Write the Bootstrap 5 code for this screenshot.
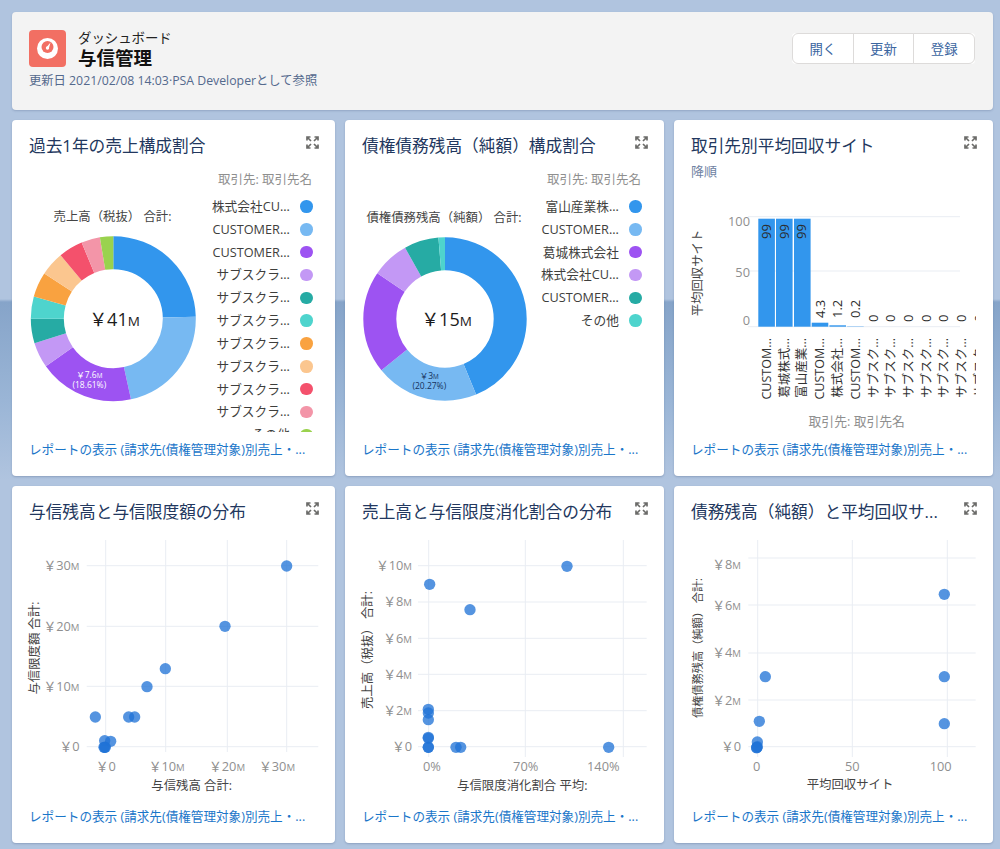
<!DOCTYPE html>
<html lang="ja">
<head>
<meta charset="utf-8">
<title>与信管理</title>
<link href="https://cdn.jsdelivr.net/npm/bootstrap@5.3.0/dist/css/bootstrap.min.css" rel="stylesheet">
<style>
html,body{height:849px;overflow:hidden}
body{font-family:"Open Sans","Noto Sans CJK JP",sans-serif;font-size:12.5px;color:#3e3e3c;
 background:linear-gradient(#b0c4df 0,#b0c4df 299px,#86a4c9 302px,#9ab5d6 400px,#b0c4df 480px)}
.dash{display:grid;grid-template-columns:323px 319px 319px;grid-template-rows:98px 356px 357px;gap:10px;padding:12px 0 0 12px}
.dash-head{grid-column:1/4;background:#f3f3f3;border-radius:4px;box-shadow:0 1px 2px rgba(60,80,120,.25);padding:17px 18px 0 17px}
.dash-icon{width:37px;height:37px;flex:none}
.kicker{font-size:13.4px;line-height:17px;color:#222;padding-top:1px}
.dash-name{font-size:18.5px;line-height:21px;font-weight:700;color:#111;margin:0}
.meta{font-size:12.3px;line-height:18px;color:#54698d;margin-top:4px}
.acts{margin-top:4px;height:31px;background:#fff;border-radius:4px}
.acts .btn{font-size:13.4px;line-height:18px;color:#3a659f;background:#fff;border-color:#dddbda;padding:5px 0;width:61.700px}
.tile{border:0;border-radius:4px;box-shadow:0 1px 2px rgba(60,80,120,.3);overflow:hidden}
.tile-top{padding:14px 16px 2px 17px;height:40px}
.tile-top.withsub{height:61px}
.tile-title{font-size:16.7px;line-height:24px;color:#22375e;margin:0;font-weight:400;white-space:nowrap}
.tile-sub{font-size:13px;line-height:20px;color:#6f82a2;padding-top:3px}
.expand{width:13px;height:13px;margin:2px 0 0 0;flex:none;stroke:#6b6b69;stroke-width:1.7;fill:none}
.tile-foot{margin-top:auto;padding:0 17px 17px 17px;line-height:18px;font-size:12.6px;white-space:nowrap}
.tile-foot a{color:#1a76c9;text-decoration:none}
.chart-row{height:272px;overflow:hidden}
.chart{display:block;flex:none}
.chart text{font-family:"Open Sans","Noto Sans CJK JP",sans-serif;font-size:12.8px;fill:#8f8f8f}
.chart text.cap{font-size:12.4px;fill:#444}
.chart text.tiny{font-size:11.2px;fill:#444}
.chart text.big{font-size:18px;fill:#1b1b1b}
.chart text.val{font-size:13px;fill:#2b2b2b}
.chart text.lab{font-size:12.5px;fill:#333}
.chart text.mini{font-size:8.5px;fill:#fff}
.chart text.mini-d{font-size:8.5px;fill:#16325c}
.chart .u{font-size:.75em}
.line{stroke:#e9edf3;stroke-width:1}
.pt{fill:#1f73d6;fill-opacity:.76}
.leg{flex:1;min-width:0;padding:10px 22px 0 0;text-align:right;height:272px;overflow:hidden}
.leg-head{line-height:20px;color:#8f8f8f;margin-bottom:5px;padding-right:1px;font-size:12.5px}
.leg ul{margin:0;padding:0;list-style:none}
.leg li{height:22.85px;display:flex;align-items:center;justify-content:flex-end;gap:10.5px;color:#3e3e3c;font-size:12.7px;white-space:nowrap}
.swatch{width:12.6px;height:12.6px;border-radius:50%;flex:none}
.c1{background:#3296ed}.c2{background:#77b9f2}.c3{background:#9d53f2}.c4{background:#c398f5}.c5{background:#26aba4}
.c6{background:#4ed4cd}.c7{background:#f9a240}.c8{background:#fbc68f}.c9{background:#f4516c}.c10{background:#f395a8}.c11{background:#9ad24e}
.seg{fill:none;stroke-width:33}
</style>
</head>
<body>
<svg width="0" height="0" class="position-absolute"><defs>
<symbol id="exp" viewBox="0 0 13 13"><path d="M1 4.500V1H4.500M1 1L5 5M8.500 1H12V4.500M12 1L8 5M1 8.500V12H4.500M1 12L5 8M8.500 12H12V8.500M12 12L8 8"/></symbol>
</defs></svg>
<main class="dash">
 <header class="dash-head d-flex justify-content-between align-items-start">
  <div>
   <div class="d-flex gap-2 align-items-center">
    <svg class="dash-icon me-1" viewBox="0 0 37 37"><rect width="37" height="37" rx="4" fill="#f26f63"/><circle cx="18.500" cy="18.500" r="10.500" fill="#fff"/><circle cx="18.500" cy="17" r="6" fill="#f26f63"/><path d="M17.300 17.500L21.500 12.500L19.800 18.500Z" fill="#fff"/><circle cx="18.500" cy="18" r="1.700" fill="#fff"/></svg>
    <div><div class="kicker">ダッシュボード</div><h1 class="dash-name">与信管理</h1></div>
   </div>
   <div class="meta">更新日 2021/02/08 14:03·PSA Developerとして参照</div>
  </div>
  <div class="btn-group acts" role="group">
   <button type="button" class="btn">開く</button>
   <button type="button" class="btn">更新</button>
   <button type="button" class="btn">登録</button>
  </div>
 </header>

 <section class="card tile">
  <div class="tile-top d-flex justify-content-between"><h2 class="tile-title">過去1年の売上構成割合</h2><svg class="expand"><use href="#exp"/></svg></div>
  <div class="d-flex chart-row">
   <svg class="chart" width="193" height="272" viewBox="12 160 193 272">
    <text x="112.500" y="221" text-anchor="middle" class="cap">売上高（税抜） 合計:</text>
    <g transform="rotate(-90 113.300 318.700)">
     <circle class="seg" cx="113.300" cy="318.700" r="66" pathLength="360" stroke="#3296ed" stroke-dasharray="88.600 360"/>
     <circle class="seg" cx="113.300" cy="318.700" r="66" pathLength="360" stroke="#77b9f2" stroke-dasharray="79 360" stroke-dashoffset="-88.600"/>
     <circle class="seg" cx="113.300" cy="318.700" r="66" pathLength="360" stroke="#9d53f2" stroke-dasharray="67.200 360" stroke-dashoffset="-167.600"/>
     <circle class="seg" cx="113.300" cy="318.700" r="66" pathLength="360" stroke="#c398f5" stroke-dasharray="17.900 360" stroke-dashoffset="-234.800"/>
     <circle class="seg" cx="113.300" cy="318.700" r="66" pathLength="360" stroke="#26aba4" stroke-dasharray="17.300 360" stroke-dashoffset="-252.700"/>
     <circle class="seg" cx="113.300" cy="318.700" r="66" pathLength="360" stroke="#4ed4cd" stroke-dasharray="15.600 360" stroke-dashoffset="-270"/>
     <circle class="seg" cx="113.300" cy="318.700" r="66" pathLength="360" stroke="#f9a240" stroke-dasharray="17.600 360" stroke-dashoffset="-285.600"/>
     <circle class="seg" cx="113.300" cy="318.700" r="66" pathLength="360" stroke="#fbc68f" stroke-dasharray="17.100 360" stroke-dashoffset="-303.200"/>
     <circle class="seg" cx="113.300" cy="318.700" r="66" pathLength="360" stroke="#f4516c" stroke-dasharray="17.100 360" stroke-dashoffset="-320.300"/>
     <circle class="seg" cx="113.300" cy="318.700" r="66" pathLength="360" stroke="#f395a8" stroke-dasharray="13.200 360" stroke-dashoffset="-337.400"/>
     <circle class="seg" cx="113.300" cy="318.700" r="66" pathLength="360" stroke="#9ad24e" stroke-dasharray="9.400 360" stroke-dashoffset="-350.600"/>
    </g>
    <text x="114.500" y="325.500" text-anchor="middle" class="big">￥41<tspan class="u">M</tspan></text>
    <text x="89.300" y="377.500" text-anchor="middle" class="mini">￥7.6<tspan class="u">M</tspan></text>
    <text x="89.300" y="387.500" text-anchor="middle" class="mini">(18.61%)</text>
   </svg>
   <div class="leg">
    <div class="leg-head">取引先: 取引先名</div>
    <ul>
     <li>株式会社CU...<span class="swatch c1"></span></li>
     <li>CUSTOMER...<span class="swatch c2"></span></li>
     <li>CUSTOMER...<span class="swatch c3"></span></li>
     <li>サブスクラ...<span class="swatch c4"></span></li>
     <li>サブスクラ...<span class="swatch c5"></span></li>
     <li>サブスクラ...<span class="swatch c6"></span></li>
     <li>サブスクラ...<span class="swatch c7"></span></li>
     <li>サブスクラ...<span class="swatch c8"></span></li>
     <li>サブスクラ...<span class="swatch c9"></span></li>
     <li>サブスクラ...<span class="swatch c10"></span></li>
     <li>その他<span class="swatch c11"></span></li>
    </ul>
   </div>
  </div>
  <div class="tile-foot"><a href="#">レポートの表示 (請求先(債権管理対象)別売上・...</a></div>
 </section>

 <section class="card tile">
  <div class="tile-top d-flex justify-content-between"><h2 class="tile-title">債権債務残高（純額）構成割合</h2><svg class="expand"><use href="#exp"/></svg></div>
  <div class="d-flex chart-row">
   <svg class="chart" width="190" height="272" viewBox="345 160 190 272">
    <text x="444" y="221.500" text-anchor="middle" class="cap">債権債務残高（純額） 合計:</text>
    <g transform="rotate(-90 445 319)">
     <circle class="seg" cx="445" cy="319" r="65.200" pathLength="360" stroke="#3296ed" stroke-dasharray="157.600 360"/>
     <circle class="seg" cx="445" cy="319" r="65.200" pathLength="360" stroke="#77b9f2" stroke-dasharray="73.500 360" stroke-dashoffset="-157.600"/>
     <circle class="seg" cx="445" cy="319" r="65.200" pathLength="360" stroke="#9d53f2" stroke-dasharray="72.900 360" stroke-dashoffset="-231.100"/>
     <circle class="seg" cx="445" cy="319" r="65.200" pathLength="360" stroke="#c398f5" stroke-dasharray="26.700 360" stroke-dashoffset="-304"/>
     <circle class="seg" cx="445" cy="319" r="65.200" pathLength="360" stroke="#26aba4" stroke-dasharray="24.600 360" stroke-dashoffset="-330.700"/>
     <circle class="seg" cx="445" cy="319" r="65.200" pathLength="360" stroke="#4ed4cd" stroke-dasharray="4.700 360" stroke-dashoffset="-355.300"/>
    </g>
    <text x="446.500" y="325.500" text-anchor="middle" class="big">￥15<tspan class="u">M</tspan></text>
    <text x="429.300" y="379" text-anchor="middle" class="mini-d">￥3<tspan class="u">M</tspan></text>
    <text x="429.300" y="388.500" text-anchor="middle" class="mini-d">(20.27%)</text>
   </svg>
   <div class="leg">
    <div class="leg-head">取引先: 取引先名</div>
    <ul>
     <li>富山産業株...<span class="swatch c1"></span></li>
     <li>CUSTOMER...<span class="swatch c2"></span></li>
     <li>葛城株式会社<span class="swatch c3"></span></li>
     <li>株式会社CU...<span class="swatch c4"></span></li>
     <li>CUSTOMER...<span class="swatch c5"></span></li>
     <li>その他<span class="swatch c6"></span></li>
    </ul>
   </div>
  </div>
  <div class="tile-foot"><a href="#">レポートの表示 (請求先(債権管理対象)別売上・...</a></div>
 </section>

 <section class="card tile">
  <div class="tile-top withsub">
   <div class="d-flex justify-content-between"><h2 class="tile-title">取引先別平均回収サイト</h2><svg class="expand"><use href="#exp"/></svg></div>
   <div class="tile-sub">降順</div>
  </div>
  <svg class="chart" width="319" height="251" viewBox="674 181 319 251">
   <defs><clipPath id="barclip"><rect x="674" y="181" width="302" height="251"/></clipPath></defs>
   <line class="line" x1="748" x2="960" y1="216.700" y2="216.700"/><line class="line" x1="748" x2="960" y1="271" y2="271"/><line class="line" x1="748" x2="960" y1="326.700" y2="326.700"/>
   <text x="750" y="226" text-anchor="end">100</text><text x="750" y="276.500" text-anchor="end">50</text><text x="750" y="324.500" text-anchor="end">0</text>
   <text transform="translate(702 273) rotate(-90)" text-anchor="middle" class="cap">平均回収サイト</text>
   <g fill="#3296ed">
    <rect x="758.300" y="218.700" width="16.600" height="108"/><rect x="776" y="218.700" width="16.600" height="108"/><rect x="794" y="218.700" width="16.600" height="108"/>
    <rect x="811.700" y="322.700" width="16.600" height="4"/><rect x="829.400" y="325.300" width="16.600" height="1.400"/><rect x="847.100" y="326.200" width="16.600" height=".5" fill="#77b9f2"/>
   </g>
   <g clip-path="url(#barclip)">
    <text transform="translate(771 239) rotate(-90)" class="val">99</text>
    <text transform="translate(788.700 239) rotate(-90)" class="val">99</text>
    <text transform="translate(806.400 239) rotate(-90)" class="val">99</text>
    <text transform="translate(824.500 318) rotate(-90)" class="val">4.3</text>
    <text transform="translate(842 318) rotate(-90)" class="val">1.2</text>
    <text transform="translate(859.700 318) rotate(-90)" class="val">0.2</text>
    <text transform="translate(877.500 322) rotate(-90)" class="val">0</text><text transform="translate(895.200 322) rotate(-90)" class="val">0</text><text transform="translate(913 322) rotate(-90)" class="val">0</text><text transform="translate(930.700 322) rotate(-90)" class="val">0</text><text transform="translate(948.400 322) rotate(-90)" class="val">0</text><text transform="translate(966 322) rotate(-90)" class="val">0</text><text transform="translate(984 322) rotate(-90)" class="val">0</text>
    <text transform="translate(771 338) rotate(-90)" text-anchor="end" class="lab">CUSTOM...</text>
    <text transform="translate(788.700 338) rotate(-90)" text-anchor="end" class="lab">葛城株式...</text>
    <text transform="translate(806.400 338) rotate(-90)" text-anchor="end" class="lab">富山産業...</text>
    <text transform="translate(824.200 338) rotate(-90)" text-anchor="end" class="lab">CUSTOM...</text>
    <text transform="translate(842 338) rotate(-90)" text-anchor="end" class="lab">株式会社...</text>
    <text transform="translate(859.700 338) rotate(-90)" text-anchor="end" class="lab">CUSTOM...</text>
    <text transform="translate(877.500 338) rotate(-90)" text-anchor="end" class="lab">サブスク...</text>
    <text transform="translate(895.200 338) rotate(-90)" text-anchor="end" class="lab">サブスク...</text>
    <text transform="translate(913 338) rotate(-90)" text-anchor="end" class="lab">サブスク...</text>
    <text transform="translate(930.700 338) rotate(-90)" text-anchor="end" class="lab">サブスク...</text>
    <text transform="translate(948.400 338) rotate(-90)" text-anchor="end" class="lab">サブスク...</text>
    <text transform="translate(966 338) rotate(-90)" text-anchor="end" class="lab">サブスク...</text>
    <text transform="translate(984 338) rotate(-90)" text-anchor="end" class="lab">サブスク...</text>
   </g>
   <text x="856.700" y="426" text-anchor="middle">取引先: 取引先名</text>
  </svg>
  <div class="tile-foot"><a href="#">レポートの表示 (請求先(債権管理対象)別売上・...</a></div>
 </section>

 <section class="card tile">
  <div class="tile-top d-flex justify-content-between"><h2 class="tile-title">与信残高と与信限度額の分布</h2><svg class="expand"><use href="#exp"/></svg></div>
  <svg class="chart" width="323" height="273" viewBox="12 526 323 273">
   <line class="line" x1="105.700" x2="105.700" y1="540" y2="752"/><line class="line" x1="165.700" x2="165.700" y1="540" y2="752"/><line class="line" x1="227.300" x2="227.300" y1="540" y2="752"/><line class="line" x1="286.700" x2="286.700" y1="540" y2="752"/>
   <line class="line" x1="86.700" x2="318.300" y1="565.700" y2="565.700"/><line class="line" x1="86.700" x2="318.300" y1="626.300" y2="626.300"/><line class="line" x1="86.700" x2="318.300" y1="686.300" y2="686.300"/><line class="line" x1="86.700" x2="318.300" y1="746.700" y2="746.700"/>
   <text x="79.500" y="570" text-anchor="end">￥30<tspan class="u">M</tspan></text><text x="79.500" y="630.500" text-anchor="end">￥20<tspan class="u">M</tspan></text><text x="79.500" y="690.500" text-anchor="end">￥10<tspan class="u">M</tspan></text><text x="79.500" y="751" text-anchor="end">￥0</text>
   <text x="105.700" y="770.500" text-anchor="middle">￥0</text><text x="166.700" y="770.500" text-anchor="middle">￥10<tspan class="u">M</tspan></text><text x="227" y="770.500" text-anchor="middle">￥20<tspan class="u">M</tspan></text><text x="277" y="770.500" text-anchor="middle">￥30<tspan class="u">M</tspan></text>
   <text x="191.700" y="789.500" text-anchor="middle" class="cap">与信残高 合計:</text>
   <text transform="translate(39 648) rotate(-90)" text-anchor="middle" class="cap">与信限度額 合計:</text>
   <g transform="translate(0 485) scale(.33333)">
    <circle class="pt" cx="860" cy="243" r="17"/><circle class="pt" cx="675" cy="424" r="17"/><circle class="pt" cx="496" cy="551" r="17"/><circle class="pt" cx="441" cy="605" r="17"/><circle class="pt" cx="386" cy="696" r="17"/><circle class="pt" cx="404" cy="696" r="17"/><circle class="pt" cx="286" cy="696" r="17"/><circle class="pt" cx="314" cy="767" r="17"/><circle class="pt" cx="332" cy="769" r="17"/><circle class="pt" cx="314" cy="787" r="17"/><circle class="pt" cx="312" cy="787" r="17"/><circle class="pt" cx="316" cy="787" r="17"/>
   </g>
  </svg>
  <div class="tile-foot"><a href="#">レポートの表示 (請求先(債権管理対象)別売上・...</a></div>
 </section>

 <section class="card tile">
  <div class="tile-top d-flex justify-content-between"><h2 class="tile-title">売上高と与信限度消化割合の分布</h2><svg class="expand"><use href="#exp"/></svg></div>
  <svg class="chart" width="319" height="273" viewBox="345 526 319 273">
   <line class="line" x1="428.700" x2="428.700" y1="540" y2="757"/><line class="line" x1="525.300" x2="525.300" y1="540" y2="757"/><line class="line" x1="623.300" x2="623.300" y1="540" y2="757"/>
   <line class="line" x1="418" x2="646.700" y1="565.700" y2="565.700"/><line class="line" x1="418" x2="646.700" y1="602" y2="602"/><line class="line" x1="418" x2="646.700" y1="638.300" y2="638.300"/><line class="line" x1="418" x2="646.700" y1="674.300" y2="674.300"/><line class="line" x1="418" x2="646.700" y1="710.700" y2="710.700"/><line class="line" x1="418" x2="646.700" y1="746.700" y2="746.700"/>
   <text x="412" y="570" text-anchor="end">￥10<tspan class="u">M</tspan></text><text x="412" y="606" text-anchor="end">￥8<tspan class="u">M</tspan></text><text x="412" y="642.500" text-anchor="end">￥6<tspan class="u">M</tspan></text><text x="412" y="678.500" text-anchor="end">￥4<tspan class="u">M</tspan></text><text x="412" y="715" text-anchor="end">￥2<tspan class="u">M</tspan></text><text x="412" y="751" text-anchor="end">￥0</text>
   <text x="432" y="770.500" text-anchor="middle">0%</text><text x="525.700" y="770.500" text-anchor="middle">70%</text><text x="603.300" y="770.500" text-anchor="middle">140%</text>
   <text x="522.300" y="789.500" text-anchor="middle" class="cap">与信限度消化割合 平均:</text>
   <text transform="translate(372 650) rotate(-90)" text-anchor="middle" class="cap">売上高（税抜） 合計:</text>
   <g transform="translate(340 485) scale(.33333)">
    <circle class="pt" cx="681" cy="244" r="17"/><circle class="pt" cx="269" cy="298" r="17"/><circle class="pt" cx="390" cy="374" r="17"/><circle class="pt" cx="265" cy="673" r="17"/><circle class="pt" cx="265" cy="684" r="17"/><circle class="pt" cx="265" cy="704" r="17"/><circle class="pt" cx="265" cy="757" r="17"/><circle class="pt" cx="265" cy="760" r="17"/><circle class="pt" cx="265" cy="787" r="17"/><circle class="pt" cx="265" cy="787" r="17"/><circle class="pt" cx="348" cy="787" r="17"/><circle class="pt" cx="362" cy="787" r="17"/><circle class="pt" cx="806" cy="787" r="17"/>
   </g>
  </svg>
  <div class="tile-foot"><a href="#">レポートの表示 (請求先(債権管理対象)別売上・...</a></div>
 </section>

 <section class="card tile">
  <div class="tile-top d-flex justify-content-between"><h2 class="tile-title">債務残高（純額）と平均回収サ...</h2><svg class="expand"><use href="#exp"/></svg></div>
  <svg class="chart" width="319" height="273" viewBox="674 526 319 273">
   <line class="line" x1="757.700" x2="757.700" y1="540" y2="757"/><line class="line" x1="852.300" x2="852.300" y1="540" y2="757"/><line class="line" x1="947.300" x2="947.300" y1="540" y2="757"/>
   <line class="line" x1="748.300" x2="975.700" y1="558" y2="558"/><line class="line" x1="748.300" x2="975.700" y1="605" y2="605"/><line class="line" x1="748.300" x2="975.700" y1="653" y2="653"/><line class="line" x1="748.300" x2="975.700" y1="700" y2="700"/><line class="line" x1="748.300" x2="975.700" y1="746.700" y2="746.700"/>
   <text x="741" y="568.500" text-anchor="end">￥8<tspan class="u">M</tspan></text><text x="741" y="610" text-anchor="end">￥6<tspan class="u">M</tspan></text><text x="741" y="657" text-anchor="end">￥4<tspan class="u">M</tspan></text><text x="741" y="704.500" text-anchor="end">￥2<tspan class="u">M</tspan></text><text x="741" y="750.500" text-anchor="end">￥0</text>
   <text x="756.700" y="770.500" text-anchor="middle">0</text><text x="852.300" y="770.500" text-anchor="middle">50</text><text x="940.700" y="770.500" text-anchor="middle">100</text>
   <text x="850" y="789" text-anchor="middle" class="cap">平均回収サイト</text>
   <text transform="translate(702 648) rotate(-90)" text-anchor="middle" class="tiny">債権債務残高（純額） 合計:</text>
   <g transform="translate(670 485) scale(.33333)">
    <circle class="pt" cx="823" cy="328" r="17"/><circle class="pt" cx="823" cy="575" r="17"/><circle class="pt" cx="286" cy="575" r="17"/><circle class="pt" cx="268" cy="709" r="17"/><circle class="pt" cx="823" cy="716" r="17"/><circle class="pt" cx="262" cy="771" r="17"/><circle class="pt" cx="262" cy="785" r="17"/><circle class="pt" cx="260" cy="788" r="17"/><circle class="pt" cx="260" cy="788" r="17"/>
   </g>
  </svg>
  <div class="tile-foot"><a href="#">レポートの表示 (請求先(債権管理対象)別売上・...</a></div>
 </section>
</main>
<script src="https://cdn.jsdelivr.net/npm/bootstrap@5.3.0/dist/js/bootstrap.bundle.min.js"></script>
</body>
</html>
